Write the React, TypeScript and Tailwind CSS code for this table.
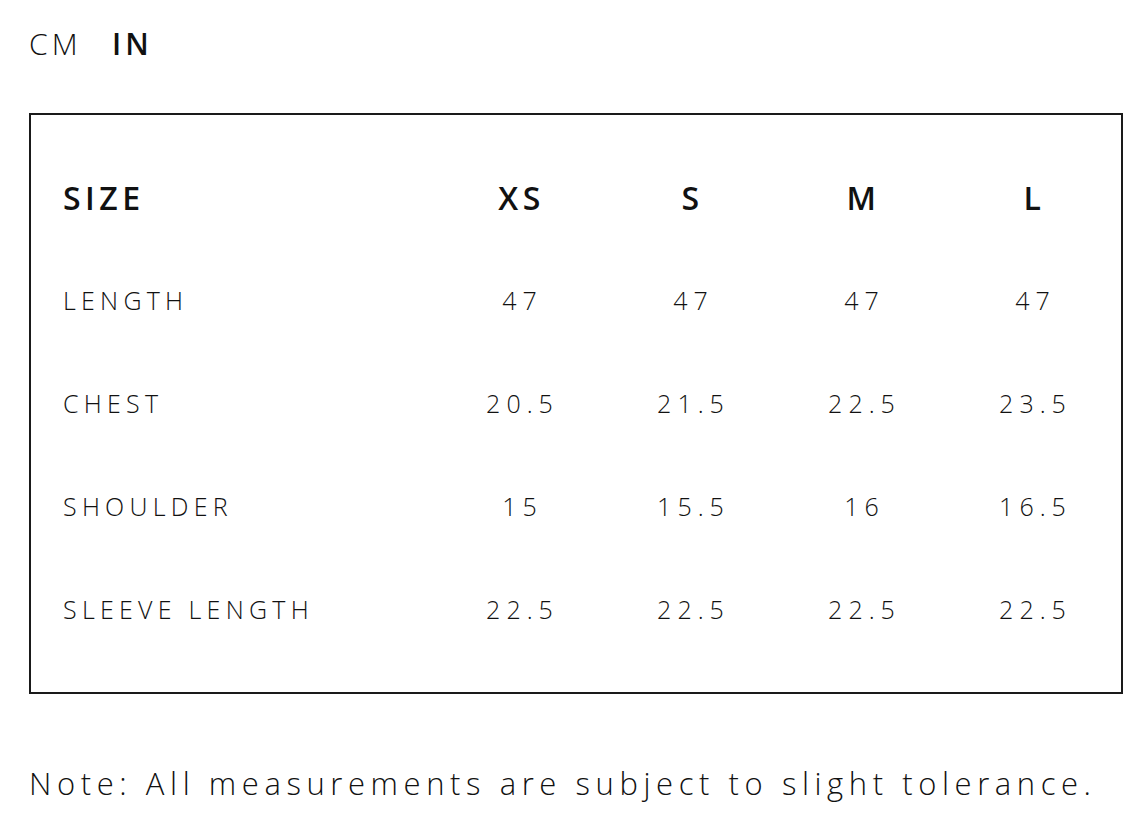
const sizes = ["XS", "S", "M", "L"];

const rows = [
  { label: "LENGTH", values: ["47", "47", "47", "47"] },
  { label: "CHEST", values: ["20.5", "21.5", "22.5", "23.5"] },
  { label: "SHOULDER", values: ["15", "15.5", "16", "16.5"] },
  { label: "SLEEVE LENGTH", values: ["22.5", "22.5", "22.5", "22.5"] },
];

export default function App() {
  return (
    <div className="min-h-[822px] w-[1142px] bg-white px-[29px] pt-[23px] font-['Open_Sans',sans-serif] text-[#111]">
      <div className="flex h-[40px] items-center gap-[30px] text-[30px] tracking-[0.14em]">
        <span className="font-light">CM</span>
        <span className="font-semibold">IN</span>
      </div>

      <div className="mt-[50px] w-[1094px] border-2 border-[#1a1a1a] pb-[31px] pl-[32px] pr-[3px] pt-[31px]">
        <div className="grid h-[103px] grid-cols-[1fr_171px_171px_171px_171px] items-center text-[32px] font-semibold tracking-[0.14em]">
          <span>SIZE</span>
          {sizes.map((s) => (
            <span key={s} className="pl-[4px] text-center">
              {s}
            </span>
          ))}
        </div>
        {rows.map((row) => (
          <div
            key={row.label}
            className="grid h-[103px] grid-cols-[1fr_171px_171px_171px_171px] items-center text-[25px] font-light"
          >
            <span className="tracking-[0.21em]">{row.label}</span>
            {row.values.map((v, i) => (
              <span key={i} className="pl-[6px] text-center tracking-[0.24em]">
                {v}
              </span>
            ))}
          </div>
        ))}
      </div>

      <p className="mt-[66px] text-[31px] font-light tracking-[0.18em]">
        Note: All measurements are subject to slight tolerance.
      </p>
    </div>
  );
}
